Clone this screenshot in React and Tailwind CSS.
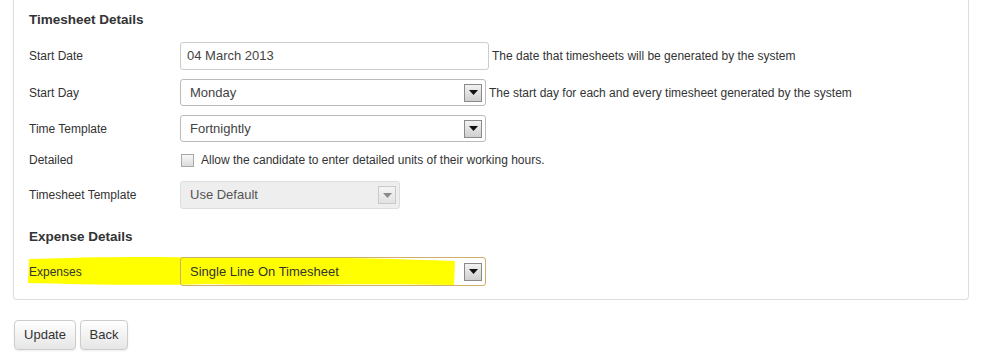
import React from "react";

const font = { fontFamily: '"Liberation Sans", Arial, sans-serif' };

const Arrow = ({ disabled }) => (
  <span
    className={
      "flex items-center justify-center w-[18px] h-[18px] border " +
      (disabled
        ? "border-[#c8c8c8] bg-gradient-to-b from-[#f4f4f4] to-[#e2e2e2]"
        : "border-[#8a8a8a] bg-gradient-to-b from-[#f2f2f2] to-[#cfcfcf]")
    }
  >
    <svg width="9" height="5" viewBox="0 0 9 5">
      <path d="M0 0h9L4.5 5z" fill={disabled ? "#8a8a8a" : "#111"} />
    </svg>
  </span>
);

const Select = ({ value, width, disabled, highlight }) => (
  <div
    className={
      "flex items-center justify-between h-[27px] pl-[9px] pr-[3px] rounded-[3px] border text-[13px] " +
      width +
      (disabled
        ? " bg-[#eeeeee] border-[#dddddd] text-[#555]"
        : highlight
        ? " bg-transparent border-[#cfae6a] text-[#333] h-[29px]"
        : " bg-white border-[#bbbbbb] text-[#444]")
    }
  >
    <span>{value}</span>
    <Arrow disabled={disabled} />
  </div>
);

const Label = ({ children }) => (
  <div className="w-[151px] shrink-0 text-[12px] text-[#333]">{children}</div>
);

const Help = ({ children }) => (
  <span className="ml-[3px] text-[12px] text-[#333]">{children}</span>
);

export default function App() {
  return (
    <div className="w-[984px] h-[353px] bg-white overflow-hidden" style={font}>
      <div className="ml-[13px] w-[956px] border-x border-b border-[#dddddd] rounded-b-[4px] pl-[15px] pt-[11px] pb-[13px]">
        <h3 className="h-[18px] leading-[18px] text-[13.5px] font-bold text-[#333]">
          Timesheet Details
        </h3>

        <div className="mt-[13px] flex items-center h-[28px]">
          <Label>Start Date</Label>
          <div className="flex items-center h-[28px] w-[309px] pl-[6px] rounded-[3px] border border-[#cccccc] text-[13px] text-[#444]">
            04 March 2013
          </div>
          <Help>The date that timesheets will be generated by the system</Help>
        </div>

        <div className="mt-[9px] flex items-center h-[27px]">
          <Label>Start Day</Label>
          <Select value="Monday" width="w-[306px]" />
          <Help>The start day for each and every timesheet generated by the system</Help>
        </div>

        <div className="mt-[9px] flex items-center h-[27px]">
          <Label>Time Template</Label>
          <Select value="Fortnightly" width="w-[306px]" />
        </div>

        <div className="mt-[8px] flex items-center h-[20px]">
          <Label>Detailed</Label>
          <span className="ml-[1px] w-[13px] h-[13px] border border-[#a8a8a8] bg-gradient-to-b from-[#f8f8f8] to-[#dcdcdc]" />
          <span className="ml-[7px] text-[12px] text-[#333]">
            Allow the candidate to enter detailed units of their working hours.
          </span>
        </div>

        <div className="mt-[11px] flex items-center h-[28px]">
          <Label>Timesheet Template</Label>
          <Select value="Use Default" width="w-[220px] h-[28px]" disabled />
        </div>

        <h3 className="mt-[19px] h-[18px] leading-[18px] text-[13.5px] font-bold text-[#333]">
          Expense Details
        </h3>

        <div className="relative mt-[11px] flex items-center h-[29px]">
          <svg
            className="absolute left-[-2px] top-[-2px]"
            width="430"
            height="32"
            viewBox="0 0 430 32"
          >
            <path
              d="M2 4 C60 2 120 1 200 3 C280 1 360 4 428 6 L427 30 C340 28 260 31 180 29 C110 31 50 29 1 28 Z"
              fill="#ffff00"
            />
          </svg>
          <div className="relative flex items-center w-full">
            <Label>Expenses</Label>
            <Select value="Single Line On Timesheet" width="w-[306px]" highlight />
          </div>
        </div>
      </div>

      <div className="mt-[20px] ml-[14px] flex gap-[4px]">
        <button className="h-[30px] w-[62px] rounded-[4px] border border-[#cccccc] bg-gradient-to-b from-white to-[#e6e6e6] text-[13px] text-[#333] shadow-[0_1px_2px_rgba(0,0,0,0.08)]">
          Update
        </button>
        <button className="h-[30px] w-[48px] rounded-[4px] border border-[#cccccc] bg-gradient-to-b from-white to-[#e6e6e6] text-[13px] text-[#333] shadow-[0_1px_2px_rgba(0,0,0,0.08)]">
          Back
        </button>
      </div>
    </div>
  );
}
